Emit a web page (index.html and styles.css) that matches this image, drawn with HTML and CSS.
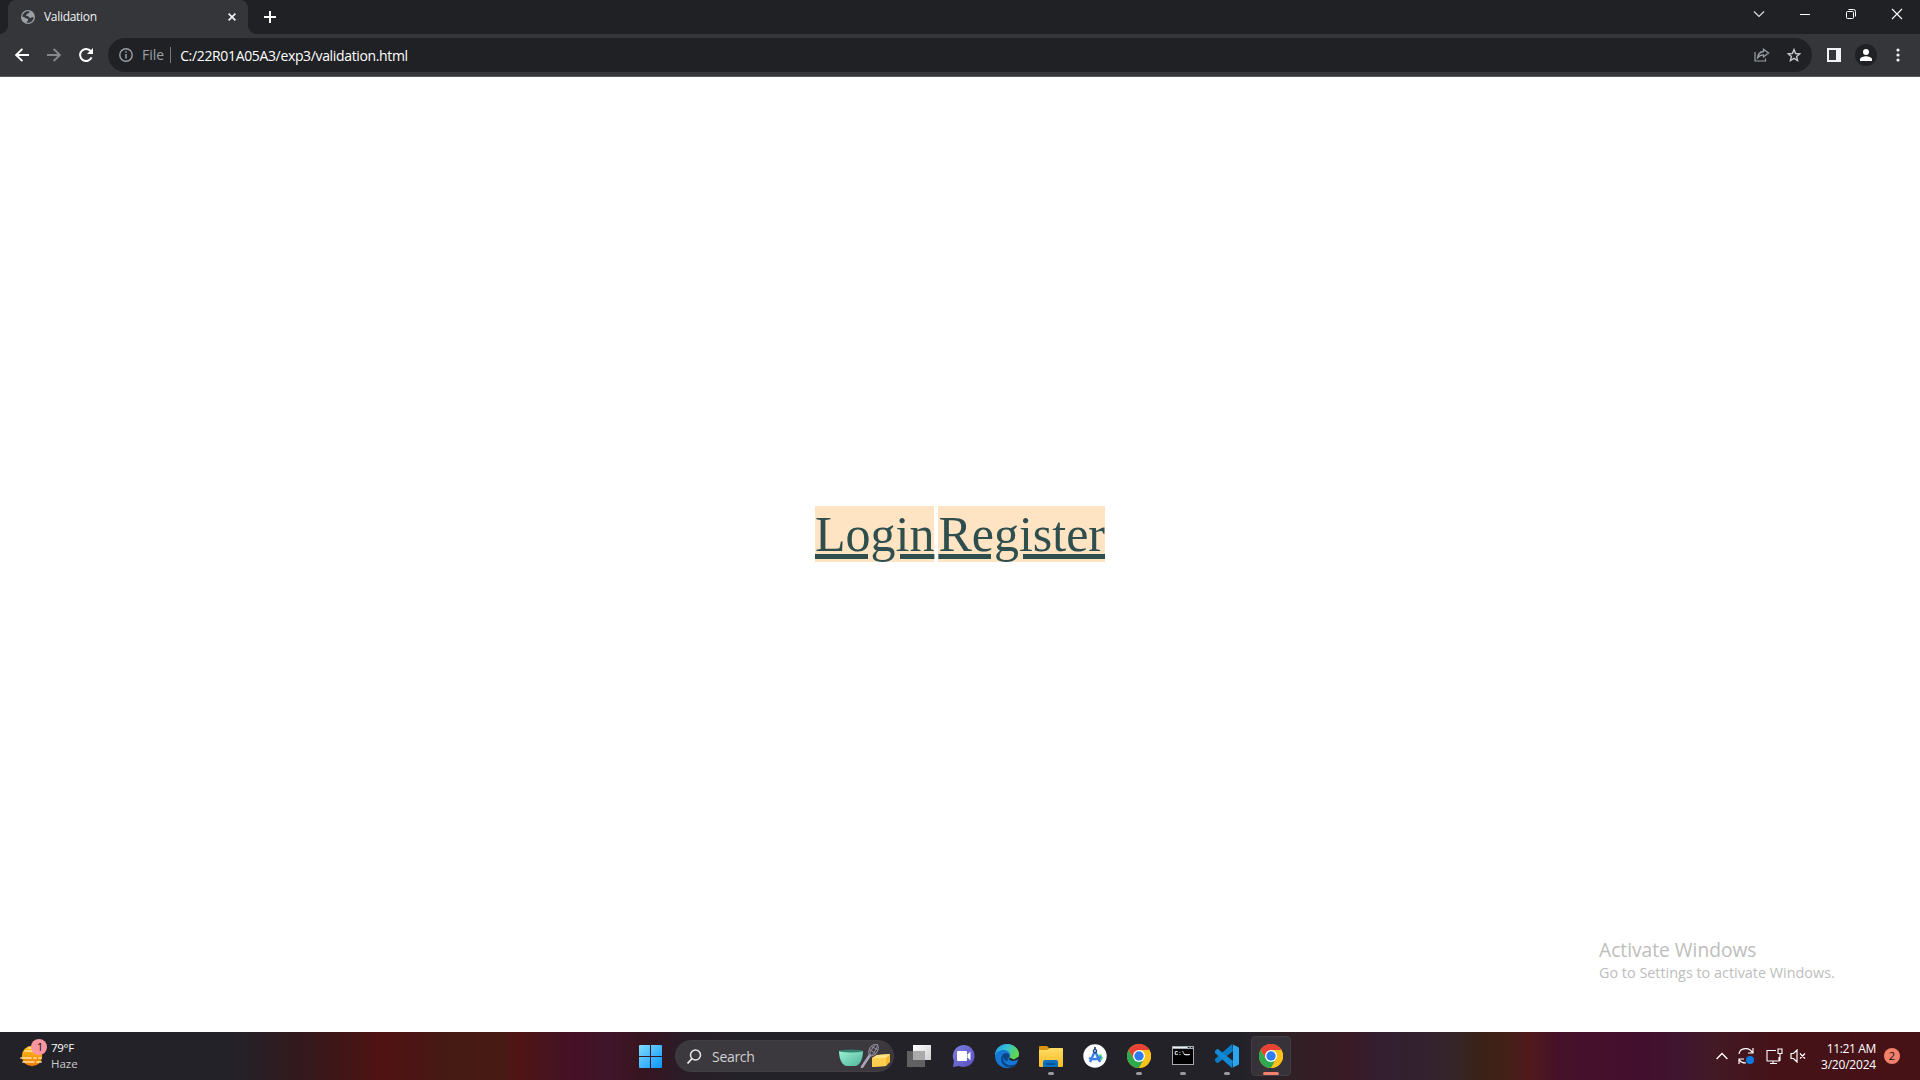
FILE: index.html
```html
<!DOCTYPE html>
<html lang="en">
<head>
<meta charset="utf-8">
<title>Validation</title>
<link rel="stylesheet" href="styles.css">
</head>
<body>
<svg width="0" height="0" class="defs">
  <defs>
    <linearGradient id="win" x1="0" y1="0" x2="1" y2="1"><stop offset="0" stop-color="#7fdcff"/><stop offset="1" stop-color="#0a95fb"/></linearGradient>
    <linearGradient id="sun" x1="0" y1="0" x2="0" y2="1"><stop offset="0" stop-color="#ffc61c"/><stop offset="1" stop-color="#ef7605"/></linearGradient>
    <linearGradient id="chat" x1="0" y1="0" x2="1" y2="1"><stop offset="0" stop-color="#7b7fe0"/><stop offset="1" stop-color="#5b4fc0"/></linearGradient>
    <linearGradient id="edgeTop" x1="0" y1="0" x2="1" y2=".4"><stop offset="0" stop-color="#1c9be8"/><stop offset=".5" stop-color="#35c1d6"/><stop offset="1" stop-color="#62d64c"/></linearGradient>
    <linearGradient id="folder" x1="0" y1="0" x2="0" y2="1"><stop offset="0" stop-color="#ffdc64"/><stop offset="1" stop-color="#fbbb24"/></linearGradient>
    <linearGradient id="bowl" x1="0" y1="0" x2="1" y2="1"><stop offset="0" stop-color="#9af0d4"/><stop offset="1" stop-color="#4fb59a"/></linearGradient>
    <linearGradient id="pane" x1="0" y1="0" x2="1" y2="1"><stop offset="0" stop-color="#fff"/><stop offset="1" stop-color="#cfcfcf"/></linearGradient>
    <symbol id="chrome" viewBox="0 0 24 24">
      <circle cx="12" cy="12" r="12" fill="#fbc11b"/>
      <path d="M12 6H22.4A12 12 0 0 0 1.6 6L6.8 15Z" fill="#e94235"/>
      <path d="M1.6 6A12 12 0 0 0 12 24L17.2 15 12 12 6.8 15Z" fill="#2da94f"/>
      <path d="M12 6H22.4A12 12 0 0 1 12 24L17.2 15Z" fill="#fbc11b"/>
      <circle cx="12" cy="12" r="6" fill="#fff"/><circle cx="12" cy="12" r="4.7" fill="#2f7cf0"/>
    </symbol>
  </defs>
</svg>
<header class="tabstrip">
  <div class="tab">
    <svg class="globe" width="14" height="14" viewBox="0 0 14 14"><circle cx="7" cy="7" r="7" fill="#9aa0a6"/><path d="M8.200 1.300C9 2.400 8 3.500 6.600 3.500 6.300 4.700 5 4.600 5 5.500c0 .8 1.200.6 2.200.8 1.200.3.700 1.600 1.800 1.700 1.500 0 1.800-.8 3.700-.7A5.800 5.800 0 0 1 5.500 12.600c.2-1.600 1.700-1.200 1.700-2.800C7.200 8.300 4.500 8.800 3.800 7.500 3.200 6.800 2.300 6.600 1.200 6.700A5.900 5.900 0 0 1 8.200 1.300Z" fill="#35363a"/></svg>
    <span class="tab-title">Validation</span>
    <svg width="8" height="8" viewBox="0 0 8 8"><path d="m.6.6 6.800 6.800m0-6.800L.6 7.400" stroke="#f1f3f4" stroke-width="1.700"/></svg>
  </div>
  <svg class="new-tab" width="12" height="12" viewBox="0 0 12 12"><path d="M6 0v12M0 6h12" stroke="#fff" stroke-width="2"/></svg>
  <div class="window-buttons">
    <svg width="46" height="28" viewBox="0 0 46 28"><path d="m18 11.500 5 5 5-5" fill="none" stroke="#ddd" stroke-width="1.200"/></svg>
    <svg width="46" height="28" viewBox="0 0 46 28"><path d="M18 14.500h10" stroke="#fff"/></svg>
    <svg width="46" height="28" viewBox="0 0 46 28"><g fill="none" stroke="#fff"><rect x="18.500" y="11.500" width="7" height="7" rx="1"/><path d="M20.500 9.500h5q2 0 2 2v5"/></g></svg>
    <svg width="46" height="28" viewBox="0 0 46 28"><path d="m18 9 10 10m0-10L18 19" stroke="#fff" stroke-width="1.100"/></svg>
  </div>
</header>
<nav class="toolbar">
  <svg class="back" width="14" height="14" viewBox="0 0 14 14"><path d="M14 7H1.500M7.400.8 1.200 7l6.200 6.200" fill="none" stroke="#fff" stroke-width="1.900"/></svg>
  <svg class="forward" width="14" height="14" viewBox="0 0 14 14"><path d="M0 7h12.500M6.600.8 12.800 7l-6.200 6.200" fill="none" stroke="#86878a" stroke-width="1.900"/></svg>
  <svg class="reload" width="15" height="14" viewBox="0 0 15 14"><path d="M12.600 9.400A6 6 0 1 1 11.600 3" fill="none" stroke="#fff" stroke-width="2"/><path d="M14 0v6H8Z" fill="#fff"/></svg>
  <div class="omnibox">
    <svg width="14" height="14" viewBox="0 0 14 14"><circle cx="7" cy="7" r="6.200" fill="none" stroke="#9aa0a6" stroke-width="1.400"/><path d="M7 6v4.500M7 3.300v1.500" stroke="#9aa0a6" stroke-width="1.500"/></svg>
    <span class="scheme">File</span>
    <span class="url">C:/22R01A05A3/exp3/validation.html</span>
    <svg class="share" width="16" height="14" viewBox="0 0 16 14"><path d="M1 4v9h10.500v-2.500" fill="none" stroke="#9aa0a6" stroke-width="1.200"/><path d="M9.500 1.200 14.500 5l-5 4V6.800C6.500 6.700 5 8 3.600 9.800 4 6.500 6 3.800 9.500 3.500Z" fill="none" stroke="#9aa0a6" stroke-width="1.300"/></svg>
    <svg width="14" height="14" viewBox="0 0 14 14"><path d="m7 1.600 1.600 3.900 4.200.3-3.200 2.700 1 4.100L7 10.400l-3.600 2.200 1-4.100L1.200 5.800l4.200-.3Z" fill="none" stroke="#c4c7ca" stroke-width="1.400"/></svg>
  </div>
  <svg class="panel" width="14" height="14" viewBox="0 0 14 14"><path d="M0 0h14v14H0ZM2 2v10h7V2Z" fill="#f1f3f4" fill-rule="evenodd"/></svg>
  <svg class="profile" width="22" height="22" viewBox="0 0 22 22"><circle cx="11" cy="11" r="11" fill="#202124"/><circle cx="11" cy="8" r="3" fill="#fff"/><path d="M5 17v-1.700c0-2 4-3 6-3s6 1 6 3V17Z" fill="#fff"/></svg>
  <svg class="menu" width="4" height="14" viewBox="0 0 4 14"><g fill="#f1f3f4"><circle cx="2" cy="2" r="1.600"/><circle cx="2" cy="7" r="1.600"/><circle cx="2" cy="12" r="1.600"/></g></svg>
</nav>
<main class="page">
  <div class="links"><a href="#">Login</a> <a href="#">Register</a></div>
  <aside class="watermark"><p class="wm-title">Activate Windows</p><p class="wm-text">Go to Settings to activate Windows.</p></aside>
</main>
<footer class="taskbar">
  <div class="weather">
    <svg width="28" height="28" viewBox="0 0 28 28"><circle cx="12" cy="17" r="10.200" fill="url(#sun)"/><g stroke="#ffe3a2" stroke-width="1.700" stroke-linecap="round"><path d="M5 12h8M1 19h10M14 19h2M19 19h2M3 23h11M17 23h4M9 9h3"/></g><circle cx="19" cy="8" r="8" fill="#fb96a0"/><text x="20" y="12" text-anchor="middle" class="badge-text">1</text></svg>
    <div class="weather-text"><span class="temp">79°F</span><span class="haze">Haze</span></div>
  </div>
  <div class="dock">
    <svg class="start" width="23" height="23" viewBox="0 0 23 23"><path d="M0 1q0-1 1-1h10v11H0ZM12 0h10q1 0 1 1v10H12ZM0 12h11v11H1q-1 0-1-1ZM12 12h11v10q0 1-1 1H12Z" fill="url(#win)"/></svg>
    <div class="search">
      <svg width="15" height="15" viewBox="0 0 15 15"><circle cx="8.500" cy="6" r="5" fill="none" stroke="#e8e8e8" stroke-width="1.500"/><path d="m5 9.500-4.500 5" stroke="#e8e8e8" stroke-width="1.800"/></svg>
      <span>Search</span>
      <svg class="baking" width="52" height="24" viewBox="0 0 52 24"><path d="M0 7c0 9 4 15 8 15h8c4 0 8-6 8-15Z" fill="url(#bowl)"/><ellipse cx="12" cy="7" rx="12" ry="1.500" fill="#347f70"/><path d="m23 23 8-12" stroke="#aaa5b4" stroke-width="2.600" stroke-linecap="round"/><g fill="none" stroke="#8f8b9d" stroke-width="1"><ellipse cx="34.500" cy="6" rx="4" ry="6.500" transform="rotate(32 34.500 6)"/><ellipse cx="34.500" cy="6" rx="1.700" ry="6.500" transform="rotate(32 34.500 6)"/><path d="m30 5 7 5M32 2l7 4"/></g><path d="m33 14 5-3 13-1v8l-4 4-14 1Z" fill="#f5b936"/><path d="m33 14 5-3 13-1-4 4Z" fill="#ffe384"/><path d="m33 14 14 0v8l-14 1Z" fill="#ffd04e"/></svg>
    </div>
    <div class="app"><svg width="24" height="24" viewBox="0 0 24 24"><path d="M6 1h18v15H6Z" fill="url(#pane)"/><path d="M0 7h18v16H0Z" fill="#6c6c6c" fill-opacity=".85"/><path d="M6 7h12v9H6Z" fill="#aaa"/></svg></div>
    <div class="app"><svg width="24" height="24" viewBox="0 0 24 24"><path d="M12.500 1A11 11 0 1 1 8 22L2 23l1-6A11 11 0 0 1 12.500 1Z" fill="url(#chat)"/><rect x="6" y="7" width="10" height="10" rx="1" fill="#fff"/><path d="m16.500 10.500 3-3v9l-3-3Z" fill="#fff"/></svg></div>
    <div class="app"><svg width="24" height="24" viewBox="0 0 24 24"><circle cx="12" cy="12" r="12" fill="#1478d4"/><path d="M0 12C0 4 6 0 12 0c7 0 12 5 12 10 0 4-3 6-6 6-2 0-4-.5-4-2 0-1 1-1 1-3 0-3-3-5-7-5-5 0-8 4-8 6Z" fill="url(#edgeTop)"/><path d="M8 12c-1 6 4 10 9 9 3 0 4-1 5.500-2-4 6-12 5-15 1-3-5-1-10 3-11 4 0 5 3 3.500 4.500C13 14 12 15 13 17c-3 0-5-2-5-5Z" fill="#0c4587"/><path d="M14 13.500c-1 3 5 5 10 1-1 2-1 3-2 5h2v-7l-5 3Z" fill="#232228"/></svg></div>
    <div class="app running"><svg width="24" height="24" viewBox="0 0 24 24"><path d="M0 4V3q0-1 1-1h7l2 2v4H0Z" fill="#dc930e"/><path d="M0 6h8l3-2h12q1 0 1 1v17q0 1-1 1H1q-1 0-1-1Z" fill="url(#folder)"/><path d="M4 23v-5q0-2 2-2h11q2 0 2 2v5Z" fill="#0b71c2"/><path d="M7 19h9v2H7Z" fill="#07528f"/></svg></div>
    <div class="app"><svg width="24" height="24" viewBox="0 0 24 24"><circle cx="12" cy="12" r="11.700" fill="#fff"/><path d="m15 11 3-1 2 4-2 3-4-1Z" fill="#56db87"/><path d="M12 7 7 18M12 7l5 11M6 14q6 3 12-1" fill="none" stroke="#3c7de8" stroke-width="2.400"/><circle cx="12" cy="7" r="1.800" fill="#86aef0" stroke="#163761"/><path d="M12 3v2" stroke="#163761" stroke-width="1.500"/></svg></div>
    <div class="app running"><svg width="24" height="24"><use href="#chrome"/></svg></div>
    <div class="app running"><svg width="24" height="24" viewBox="0 0 24 24"><path d="M1 2h22v19H1Z" fill="#a6abb0"/><path d="M2 5h20v15H2Z" fill="#000"/><path d="M2 3h14v1H2Z" fill="#e8eef2"/><path d="M17 3h1.500v1H17ZM20 3h1.500v1H20Z" fill="#222"/><text x="3.500" y="11" class="cmd-text">C:\_</text><path d="M13 10.500h6" stroke="#ddd"/></svg></div>
    <div class="app running"><svg width="24" height="24" viewBox="0 0 24 24"><path d="M17 0 0 15v2l2 2h1L18 7Z" fill="#087dc5"/><path d="M0 8v-1l2-2h1l15 12-1 7L0 9Z" fill="#1389d2"/><path d="m17 0 6 3q1 .5 1 1.500v15q0 1-1 1.500l-6 3 1-1V1Z" fill="#2ca5ef"/></svg></div>
    <div class="app running active"><svg width="24" height="24"><use href="#chrome"/></svg></div>
  </div>
  <div class="tray">
    <svg width="12" height="8" viewBox="0 0 12 8"><path d="m.6 7 5.400-5.500L11.400 7" fill="none" stroke="#fff" stroke-width="1.300"/></svg>
    <svg class="sync" width="17" height="18" viewBox="0 0 17 18"><path d="M1 7C2 0 12 0 14.500 6M15 1v5h-5M1 17v-5h5M1 12c1 3 4 4 7 4" fill="none" stroke="#fff" stroke-width="1.200"/><circle cx="12" cy="13" r="4" fill="#0b7ae0"/></svg>
    <svg class="network" width="17" height="17" viewBox="0 0 17 17"><g fill="none" stroke="#fff" stroke-width="1.100"><path d="M10 2.500H1v10.500h12V9M4 15.500h7M7 13v2.500M12 1h4v4.500h-4ZM14 5.500V13"/></g></svg>
    <svg class="volume" width="16" height="14" viewBox="0 0 16 14"><path d="M1 4.500h2.500L7 1v12L3.500 9.500H1ZM10 4.500l5 5m0-5-5 5" fill="none" stroke="#fff" stroke-width="1.200"/></svg>
    <div class="clock"><span class="time">11:21 AM</span><span class="date">3/20/2024</span></div>
    <span class="notice">2</span>
  </div>
</footer>
</body>
</html>
```
FILE: styles.css
```css
* { box-sizing: border-box; }
body { margin: 0; height: 1080px; display: flex; flex-direction: column; overflow: hidden; background: #fff; font-family: "Open Sans", sans-serif; }
svg { display: block; flex: none; }
.defs { position: absolute; }
span { white-space: nowrap; }

.tabstrip { height: 34px; flex: none; display: flex; align-items: flex-start; background: #202124; padding-left: 8px; }
.tab { position: relative; width: 240px; height: 34px; display: flex; align-items: center; padding: 0 12px 0 13px; background: #35363a; border-radius: 8px 8px 0 0; color: #f1f3f4; }
.tab::before, .tab::after { content: ""; position: absolute; bottom: 0; width: 8px; height: 8px; }
.tab::before { left: -8px; background: radial-gradient(circle at 0 0, transparent 7.5px, #35363a 8px); }
.tab::after { right: -8px; background: radial-gradient(circle at 100% 0, transparent 7.5px, #35363a 8px); }
.tab-title { flex: 1; margin-left: 9px; padding-bottom: 1px; font-size: 12px; letter-spacing: -.3px; }
.new-tab { margin: 11px 0 0 16px; }
.window-buttons { display: flex; margin-left: auto; }

.toolbar { height: 43px; flex: none; display: flex; align-items: center; padding: 0 20px 0 15px; background: #35363a; border-bottom: 1px solid #5b5a5f; }
.forward { margin-left: 18px; }
.reload { margin-left: 18px; }
.omnibox { flex: 1; height: 34px; margin-left: 14px; padding: 0 11px; display: flex; align-items: center; border-radius: 17px; background: #202124; font-size: 14px; }
.scheme { margin-left: 9px; padding-right: 6px; border-right: 1px solid #777a7e; color: #9aa0a6; line-height: 16px; }
.url { margin-left: 9px; color: #fff; letter-spacing: -.35px; }
.share { margin: 0 17px 0 auto; }
.panel { margin-left: 15px; }
.profile { margin-left: 14px; }
.menu { margin-left: 19px; }

.page { flex: 1; display: flex; flex-direction: column; align-items: center; padding-top: 429px; font-family: "Liberation Serif", serif; }
.links { font-size: 16px; line-height: 56px; }
.links a { font-size: 50px; color: #2f4f4f; background: #ffe4c4; }
.watermark { align-self: flex-end; width: 321px; margin-top: 363px; font-family: "Open Sans", sans-serif; color: #bdbdbd; white-space: nowrap; }
.watermark p { margin: 0; }
.wm-title { font-size: 19.200px; line-height: 26px; }
.wm-text { font-size: 14.400px; line-height: 20px; }

.taskbar { height: 48px; flex: none; display: grid; grid-template-columns: 1fr auto 1fr; align-items: center; color: #fff; background: linear-gradient(90deg, #232229 0, #232229 230px, #33191d 300px, #471414 360px, #501213 380px, #4c1414 410px, #451b14 450px, #481a14 500px, #501414 520px, #471520 550px, #451025 575px, #40162a 610px, #38141f 640px, #2b1c28 680px, #232229 740px, #232229 1240px, #302026 1290px, #3a1a24 1345px, #331f30 1380px, #33212f 1420px, #35252a 1450px, #3a2218 1480px, #432018 1505px, #501a1c 1530px, #46112a 1560px, #430f2e 1640px, #40152f 1680px, #421a26 1710px, #451218 1770px, #461216 1920px); }
.weather { display: flex; padding-left: 20px; margin-top: -4px; }
.weather svg { margin-top: 3px; }
.weather-text { display: flex; flex-direction: column; margin: 4px 0 0 3px; font-size: 11.500px; line-height: 16px; }
.temp { letter-spacing: -.3px; }
.haze { color: #ccc; }
.badge-text { font-size: 11.500px; fill: #111; }
.dock { display: flex; align-items: center; padding-left: 12px; }
.start { margin-right: 13px; }
.search { width: 219px; height: 32px; display: flex; align-items: center; margin-right: 3px; padding: 0 2px 0 11px; border-radius: 16px; background: #3b383e; border: 1px solid #413e44; font-size: 14px; color: #d1d0d2; }
.search span { margin-left: 10px; letter-spacing: -.3px; }
.baking { margin-left: auto; }
.app { position: relative; width: 40px; height: 40px; margin: 0 2px; display: flex; align-items: center; justify-content: center; border-radius: 4px; }
.running::after { content: ""; position: absolute; left: 17px; bottom: 1px; width: 6px; height: 3px; border-radius: 2px; background: #9b999d; }
.active { background: #373239; border: 1px solid #403c42; }
.active::after { left: 11px; bottom: 0; width: 16px; background: #f3806b; }
.cmd-text { font: bold 6px "Liberation Mono", monospace; fill: #fff; }
.tray { display: flex; align-items: center; justify-content: flex-end; padding-right: 20px; }
.sync { margin-left: 10px; }
.network { margin-left: 11px; }
.volume { margin-left: 7px; }
.clock { width: 70px; padding-top: 1px; display: flex; flex-direction: column; align-items: flex-end; font-size: 12px; line-height: 16px; }
.time { letter-spacing: -.35px; }
.date { letter-spacing: -.2px; }
.notice { width: 16px; height: 16px; margin-left: 8px; border-radius: 50%; background: #f3806b; color: #111; font-size: 11px; line-height: 16px; text-align: center; }
```
